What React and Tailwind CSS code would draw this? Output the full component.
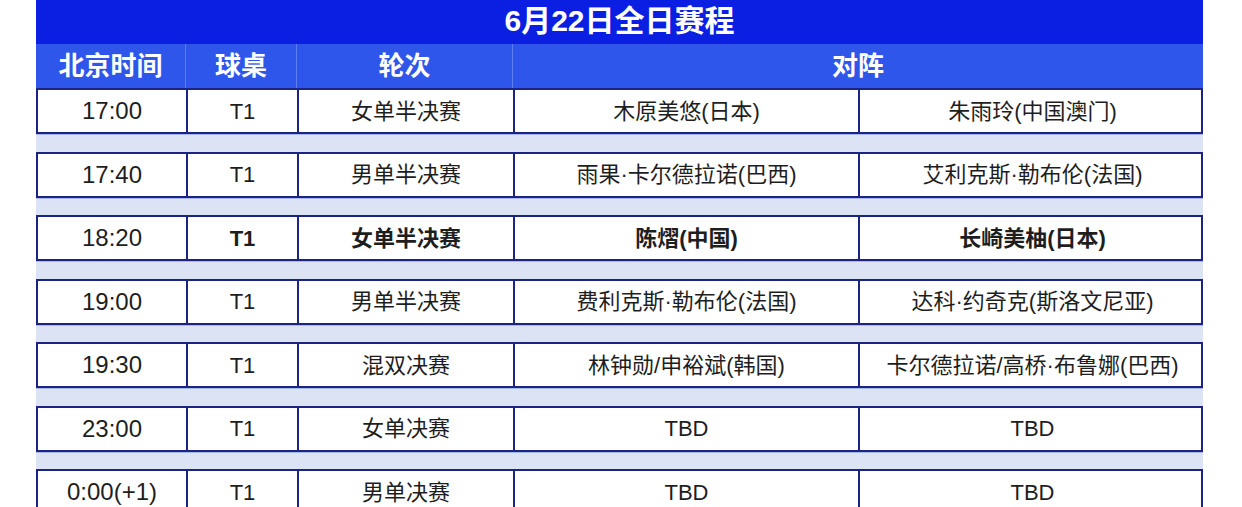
import React from 'react'

const rows = [
  { time: '17:00', table: 'T1', round: '女单半决赛', a: '木原美悠(日本)', b: '朱雨玲(中国澳门)' },
  { time: '17:40', table: 'T1', round: '男单半决赛', a: '雨果·卡尔德拉诺(巴西)', b: '艾利克斯·勒布伦(法国)' },
  { time: '18:20', table: 'T1', round: '女单半决赛', a: '陈熠(中国)', b: '长崎美柚(日本)', bold: true },
  { time: '19:00', table: 'T1', round: '男单半决赛', a: '费利克斯·勒布伦(法国)', b: '达科·约奇克(斯洛文尼亚)' },
  { time: '19:30', table: 'T1', round: '混双决赛', a: '林钟勋/申裕斌(韩国)', b: '卡尔德拉诺/高桥·布鲁娜(巴西)' },
  { time: '23:00', table: 'T1', round: '女单决赛', a: 'TBD', b: 'TBD' },
  { time: '0:00(+1)', table: 'T1', round: '男单决赛', a: 'TBD', b: 'TBD' },
]

const cols = 'grid grid-cols-[150px_111px_216px_345px_345px]'

export default function App() {
  return (
    <div
      className="w-[1242px] h-[507px] overflow-hidden bg-white"
      style={{ fontFamily: '"Liberation Sans", "Noto Sans CJK SC", sans-serif' }}
    >
      <div className="ml-[36px] w-[1167px]">
        {/* title */}
        <div className="h-[44px] bg-[#0b1fe2] flex items-center justify-center pb-[3px]">
          <span className="text-white font-bold text-[30px] leading-none">6月22日全日赛程</span>
        </div>

        {/* header */}
        <div className={`${cols} h-[44px] bg-[#2f56ea] text-white font-bold text-[26px]`}>
          <div className="flex items-center justify-center border-r border-[#5e7ef0]">北京时间</div>
          <div className="flex items-center justify-center border-r border-[#5e7ef0]">球桌</div>
          <div className="flex items-center justify-center border-r border-[#5e7ef0]">轮次</div>
          <div className="col-span-2 flex items-center justify-center">对阵</div>
        </div>

        {rows.map((r, i) => (
          <React.Fragment key={i}>
            {i > 0 && <div className="h-[17.5px] bg-[#dce3f5] border-t border-[#a9b8ea]" />}
            <div
              className={`${cols} h-[46px] bg-white border-2 border-[#1b2483] text-[22px] text-[#1e1e1e]`}
            >
              <div className="flex items-center justify-center border-r-2 border-[#1b2483] text-[24px]">{r.time}</div>
              <div className={`flex items-center justify-center border-r-2 border-[#1b2483] ${r.bold ? 'font-bold' : ''}`}>{r.table}</div>
              <div className={`flex items-center justify-center border-r-2 border-[#1b2483] ${r.bold ? 'font-bold' : ''}`}>{r.round}</div>
              <div className={`flex items-center justify-center border-r-2 border-[#1b2483] ${r.bold ? 'font-bold' : ''}`}>{r.a}</div>
              <div className={`flex items-center justify-center ${r.bold ? 'font-bold' : ''}`}>{r.b}</div>
            </div>
          </React.Fragment>
        ))}
      </div>
    </div>
  )
}
